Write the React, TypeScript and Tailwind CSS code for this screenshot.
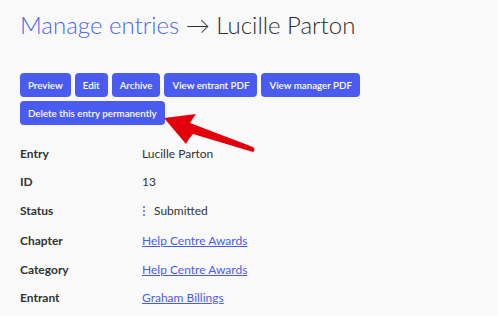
import React from "react";

const btn =
  "h-6 px-2 rounded-[4px] bg-[#4a5cf0] text-white text-[9.75px] font-semibold leading-6 whitespace-nowrap";

const rows: { label: string; value: string; link?: boolean; status?: boolean; h: string }[] = [
  { label: "Entry", value: "Lucille Parton", h: "h-[28px]" },
  { label: "ID", value: "13", h: "h-[28px]" },
  { label: "Status", value: "Submitted", status: true, h: "h-[30px]" },
  { label: "Chapter", value: "Help Centre Awards", link: true, h: "h-[30px]" },
  { label: "Category", value: "Help Centre Awards", link: true, h: "h-[28px]" },
  { label: "Entrant", value: "Graham Billings", link: true, h: "h-[28px]" },
];

export default function App() {
  return (
    <div
      className="relative w-[498px] h-[316px] overflow-hidden bg-[#f9f9fa] text-[#333]"
      style={{ fontFamily: 'Lato, "Open Sans", sans-serif' }}
    >
      <div className="pl-5 pt-[8px]">
        <h1 className="text-[24px] leading-[34px] font-light text-[#2e2e2e] h-[36px]">
          <span className="text-[#4a66f0]">Manage entries</span> → Lucille Parton
        </h1>
        <div className="mt-[29px] flex flex-wrap gap-x-1 gap-y-1 w-[400px]">
          <button className={btn}>Preview</button>
          <button className={btn}>Edit</button>
          <button className={btn}>Archive</button>
          <button className={btn}>View entrant PDF</button>
          <button className={btn}>View manager PDF</button>
          <button className={btn}>Delete this entry permanently</button>
        </div>
        <div className="mt-[15px] flex flex-col">
          {rows.map((r) => (
            <div key={r.label} className={`flex items-center text-[12px] ${r.h}`}>
              <div className="w-[122px] font-bold text-[#333]">{r.label}</div>
              {r.status ? (
                <div className="flex items-center">
                  <span className="flex flex-col gap-[2px] w-[12px] items-start pl-[1px]">
                    <span className="w-[2px] h-[2px] bg-[#4a5cf0] rounded-full" />
                    <span className="w-[2px] h-[2px] bg-[#4a5cf0] rounded-full" />
                    <span className="w-[2px] h-[2px] bg-[#4a5cf0] rounded-full" />
                  </span>
                  <span className="text-[#333]">{r.value}</span>
                </div>
              ) : r.link ? (
                <a className="text-[#4a5cf0] underline">{r.value}</a>
              ) : (
                <span className="text-[#333]">{r.value}</span>
              )}
            </div>
          ))}
        </div>
      </div>
      <svg
        className="absolute left-0 top-0 pointer-events-none"
        width="498"
        height="316"
        viewBox="0 0 498 316"
      >
        <path
          d="M164 118 L196 114 Q193 118 190 123 L253 147 Q256 150 253 152 L193 134 Q189 138 186 144 Z"
          fill="#e3000b"
        />
      </svg>
    </div>
  );
}
